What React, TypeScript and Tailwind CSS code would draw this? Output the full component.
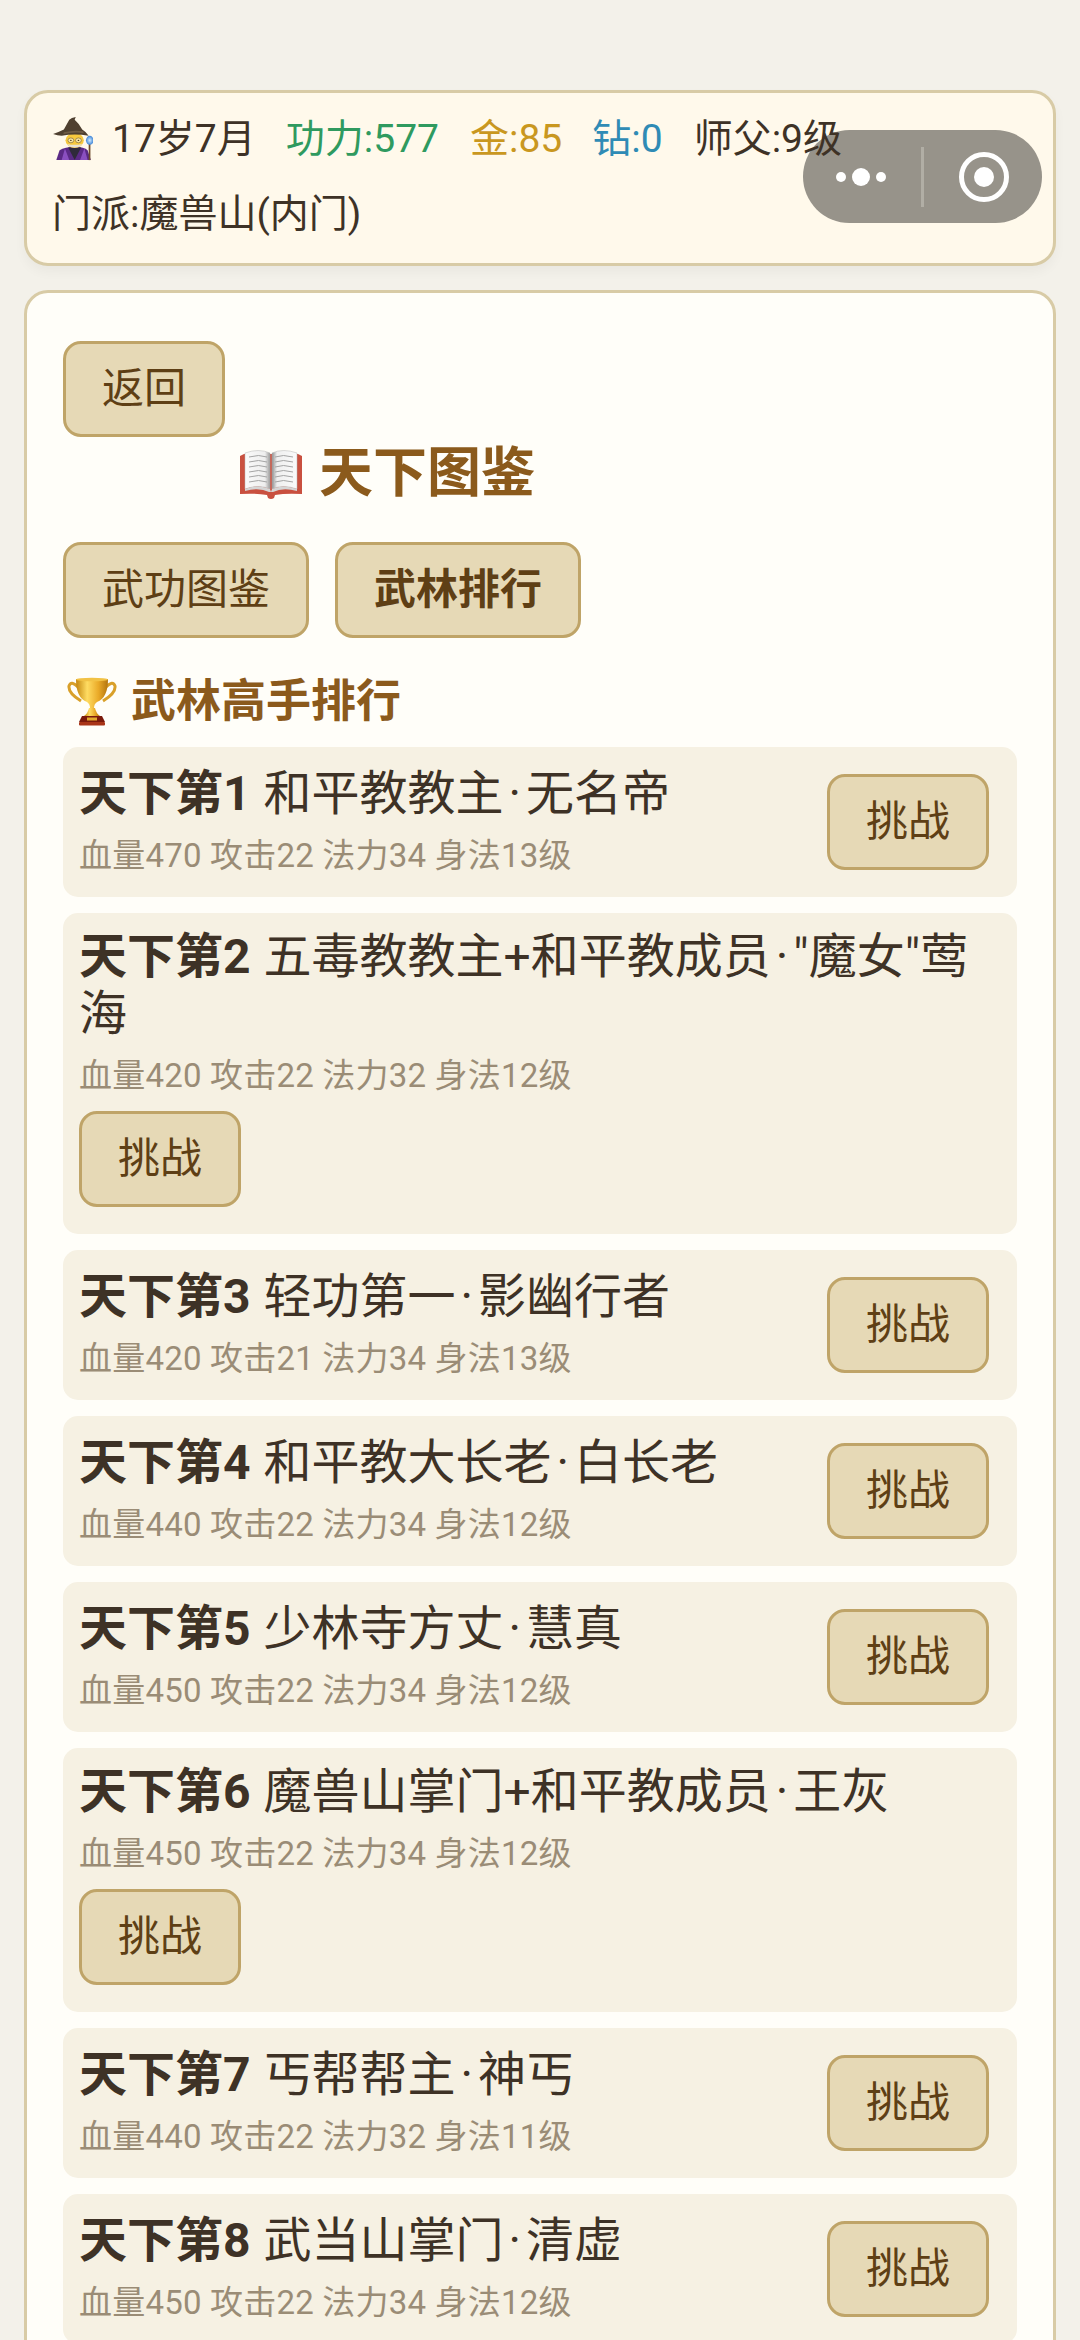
import React from "react";

const players = [
  { rank: 1, title: "和平教教主", name: "无名帝", stats: "血量470 攻击22 法力34 身法13级" },
  { rank: 2, title: "五毒教教主+和平教成员", name: '"魔女"莺海', stats: "血量420 攻击22 法力32 身法12级" },
  { rank: 3, title: "轻功第一", name: "影幽行者", stats: "血量420 攻击21 法力34 身法13级" },
  { rank: 4, title: "和平教大长老", name: "白长老", stats: "血量440 攻击22 法力34 身法12级" },
  { rank: 5, title: "少林寺方丈", name: "慧真", stats: "血量450 攻击22 法力34 身法12级" },
  { rank: 6, title: "魔兽山掌门+和平教成员", name: "王灰", stats: "血量450 攻击22 法力34 身法12级" },
  { rank: 7, title: "丐帮帮主", name: "神丐", stats: "血量440 攻击22 法力32 身法11级" },
  { rank: 8, title: "武当山掌门", name: "清虚", stats: "血量450 攻击22 法力34 身法12级" },
];

function MageIcon() {
  return (
    <svg viewBox="9 12 38 49" className="w-[41px] h-[44px] shrink-0 mr-[19px]" preserveAspectRatio="none">
      <defs>
        <radialGradient id="crystal" cx="0.5" cy="0.5" r="0.5">
          <stop offset="0" stopColor="#cfeaff" />
          <stop offset="1" stopColor="#3f86d8" />
        </radialGradient>
      </defs>
      <path d="M13 60 L16 49 Q21 45 30 45 Q39 45 42 49 L45 60 Z" fill="#5b2a86" />
      <path d="M24 46 L30 60 L36 46 Z" fill="#2f2a3a" />
      <path d="M21 47 L25 60 L18 60 Z M39 47 L35 60 L42 60 Z" fill="#8a4fc0" />
      <rect x="43" y="36" width="1.6" height="24" fill="#6b4a2a" />
      <ellipse cx="44" cy="38" rx="3.5" ry="5" fill="url(#crystal)" />
      <circle cx="30" cy="38" r="8.5" fill="#f7c93e" />
      <path d="M30 46 Q25 46 23 42 Q30 44 37 42 Q35 46 30 46 Z" fill="#e8e2d2" />
      <circle cx="26.5" cy="38" r="2.7" fill="#fbe7a0" stroke="#6d5a3a" strokeWidth="0.6" />
      <circle cx="33.5" cy="38" r="2.7" fill="#fbe7a0" stroke="#6d5a3a" strokeWidth="0.6" />
      <circle cx="26.5" cy="38" r="0.8" fill="#3a2a1a" />
      <circle cx="33.5" cy="38" r="0.8" fill="#3a2a1a" />
      <path d="M10 31 Q15 29 20 26 L25 15 Q27 13 31 12 L30 15 Q34 19 37 26 Q40 28 43 33 Q30 30 18 33 Q14 33 10 31 Z" fill="#4f4030" />
      <path d="M20 29 Q30 26 38 28 L38.5 30 Q30 28 19.5 31 Z" fill="#6f5c46" />
    </svg>
  );
}

function BookIcon() {
  return (
    <svg viewBox="9 12 62 53" className="w-[62px] h-[53px] shrink-0">
      <defs>
        <linearGradient id="leftPage" x1="0" y1="0" x2="1" y2="0">
          <stop offset="0" stopColor="#fafafa" />
          <stop offset="0.8" stopColor="#eeeeee" />
          <stop offset="1" stopColor="#9b9b9b" />
        </linearGradient>
        <linearGradient id="rightPage" x1="0" y1="0" x2="1" y2="0">
          <stop offset="0" stopColor="#8f8f8f" />
          <stop offset="0.2" stopColor="#efefef" />
          <stop offset="1" stopColor="#fafafa" />
        </linearGradient>
      </defs>
      <path d="M13 19 L9 21 L9 59 Q25 58 36 60 L37 63 Q40 65 43 63 L44 60 Q55 58 71 59 L71 21 L67 19 Z" fill="#c9503f" />
      <path d="M14 18 Q28 13 39 18 L39 54 Q28 49 14 54 Z" fill="url(#leftPage)" stroke="#b5b5b5" strokeWidth="0.5" />
      <path d="M41 18 Q52 13 66 18 L66 54 Q52 49 41 54 Z" fill="url(#rightPage)" stroke="#b5b5b5" strokeWidth="0.5" />
      <path d="M18 22 Q28 19 36 22 M18 27 Q28 24 36 27 M18 32 Q28 29 36 32 M18 37 Q28 34 36 37 M18 42 Q28 39 36 42 M18 47 Q28 44 36 47" stroke="#a4a4a4" strokeWidth="1" fill="none" />
      <path d="M44 22 Q52 19 62 22 M44 27 Q52 24 62 27 M44 32 Q52 29 62 32 M44 37 Q52 34 62 37 M44 42 Q52 39 62 42 M44 47 Q52 44 62 47" stroke="#a4a4a4" strokeWidth="1" fill="none" />
      <path d="M14 54 Q28 49 39 54 L40 57 L41 54 Q52 49 66 54 L66 56 Q52 52 42 57 L38 57 Q28 52 14 56 Z" fill="#d5d5d5" />
    </svg>
  );
}

function TrophyIcon() {
  return (
    <svg viewBox="6 6 50 50" className="w-[50px] h-[50px] shrink-0">
      <defs>
        <linearGradient id="gold" x1="0" y1="0" x2="1" y2="0">
          <stop offset="0" stopColor="#c4860f" />
          <stop offset="0.35" stopColor="#ffdc62" />
          <stop offset="0.7" stopColor="#eaaa28" />
          <stop offset="1" stopColor="#b3740e" />
        </linearGradient>
      </defs>
      <path d="M17 16 Q10 9 8 15 Q7 22 20 30" fill="none" stroke="#d9a02a" strokeWidth="3" />
      <path d="M45 16 Q52 9 54 15 Q55 22 42 30" fill="none" stroke="#d9a02a" strokeWidth="3" />
      <path d="M15 8 L47 8 Q47 27 36 31 Q33 33 33 37 L29 37 Q29 33 26 31 Q15 27 15 8 Z" fill="url(#gold)" />
      <ellipse cx="31" cy="8.5" rx="16" ry="1.8" fill="#f2c245" />
      <path d="M28 37 L34 37 Q35 42 39 45 L23 45 Q27 42 28 37 Z" fill="url(#gold)" />
      <path d="M21 45 L41 45 L44 51 L18 51 Z" fill="#7b1a0c" />
      <rect x="18" y="51" width="26" height="3.5" rx="1" fill="#a93518" />
      <rect x="26" y="46.5" width="10" height="3" fill="#e3a92c" />
    </svg>
  );
}

function Capsule() {
  return (
    <div className="absolute left-[803px] top-[130px] w-[239px] h-[93px] rounded-full bg-[#97938a]">
      <svg viewBox="0 0 239 93" className="w-[239px] h-[93px]">
        <circle cx="38" cy="47" r="5" fill="#fff" />
        <circle cx="58" cy="47" r="9" fill="#fff" />
        <circle cx="78" cy="47" r="5" fill="#fff" />
        <rect x="118" y="17" width="3" height="60" fill="#b1aea5" />
        <circle cx="181" cy="47" r="22.5" fill="none" stroke="#fff" strokeWidth="5" />
        <circle cx="181" cy="47" r="10" fill="#fff" />
      </svg>
    </div>
  );
}

function ActionButton({ label, bold }: { label: string; bold?: boolean }) {
  return (
    <button
      className={`h-[96px] px-[36px] pb-[1px] rounded-[18px] border-[3px] border-[#bfa468] bg-[#e6d9b6] text-[42px] leading-none text-[#5e3f15] ${
        bold ? "font-bold" : ""
      }`}
    >
      {label}
    </button>
  );
}

function RankRow({ rank, title, name, stats }: { rank: number; title: string; name: string; stats: string }) {
  return (
    <div className="flex flex-wrap items-center justify-between rounded-[15px] bg-[#f6f1e3] px-[16px] py-[15px]">
      <div className="pb-[1px]">
        <div className="text-[48px] leading-[57px] text-[#3e3226]">
          <span className="mr-[1px] font-bold">天下第{rank}</span> {title}
          <span className="mx-[5px]">·</span>
          {name}
        </div>
        <div className="mt-[12px] text-[33px] leading-[44px] tracking-[0.2px] text-[#9a8c76]">{stats}</div>
      </div>
      <div className="my-[12px] mr-[12px]">
        <ActionButton label="挑战" />
      </div>
    </div>
  );
}

export default function App() {
  return (
    <div className="relative h-[2340px] w-[1080px] overflow-hidden bg-[#f3f1ea] px-[24px] pt-[90px] font-['Roboto','Noto_Sans_CJK_SC',sans-serif]">
      {/* Status card */}
      <div className="h-[176px] rounded-[24px] border-[3px] border-[#d8cba6] bg-[#fff9eb] pl-[25px] pt-[18px] text-[39px] leading-[56px] text-[#3e3226] shadow-[0_6px_12px_rgba(0,0,0,0.04)]">
        <div className="relative z-10 flex items-center">
          <MageIcon />
          <span className="mr-[30px]">17岁7月</span>
          <span className="mr-[31px] text-[#2f9a5f]">功力:577</span>
          <span className="mr-[30px] text-[#c9971f]">金:85</span>
          <span className="mr-[31px] text-[#2f8bb5]">钻:0</span>
          <span>师父:9级</span>
        </div>
        <div className="relative z-10 mt-[19px]">门派:魔兽山(内门)</div>
      </div>

      {/* Main card */}
      <div className="mt-[24px] h-[2200px] rounded-[24px] border-[3px] border-[#d8cba6] bg-[#fffef9] px-[36px] pt-[48px]">
        <ActionButton label="返回" />

        <div className="ml-[177px] flex h-[72px] items-center gap-[17px] text-[54px] font-bold text-[#8b5a1c]">
          <BookIcon />
          <span>天下图鉴</span>
        </div>

        <div className="mt-[33px] flex gap-[26px]">
          <ActionButton label="武功图鉴" />
          <ActionButton label="武林排行" bold />
        </div>

        <div className="mt-[34px] mb-[15px] ml-[4px] flex h-[60px] items-center gap-[14px] text-[45px] font-bold text-[#8b5a1c]">
          <TrophyIcon />
          <span>武林高手排行</span>
        </div>

        <div className="flex flex-col gap-[16px]">
          {players.map((p) => (
            <RankRow key={p.rank} {...p} />
          ))}
        </div>
      </div>

      <Capsule />
    </div>
  );
}
